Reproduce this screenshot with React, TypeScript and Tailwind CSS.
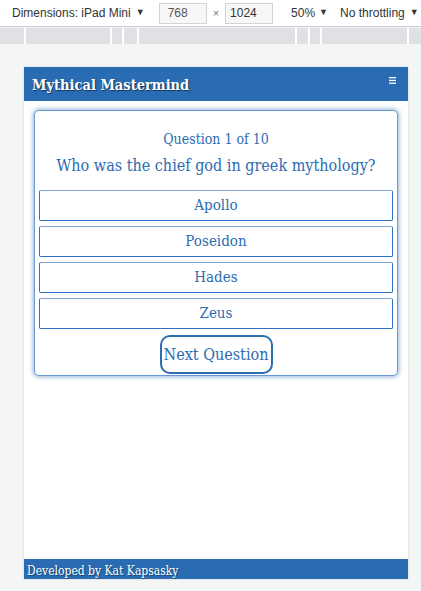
const answers = ["Apollo", "Poseidon", "Hades", "Zeus"];

const rulerSegments = [24, 86, 12, 15, 158, 13, 12, 87, 14];

function Toolbar() {
  return (
    <div className="flex h-[27px] items-center bg-white text-[12px] text-[#333] font-['Liberation_Sans',sans-serif] border-b border-[#cbcdd1]">
      <span className="ml-[12px]">Dimensions: iPad Mini</span>
      <span className="ml-[5px] text-[9px]">▼</span>
      <div className="ml-[14px] flex h-[21px] w-[48px] items-center border border-[#d4d4d4] bg-[#f7f7f7] pl-[8px] text-[#555]">
        768
      </div>
      <span className="mx-[6px] text-[11px] text-[#777]">×</span>
      <div className="flex h-[21px] w-[48px] items-center border border-[#d4d4d4] bg-[#f7f7f7] pl-[4px]">
        1024
      </div>
      <span className="ml-[18px]">50%</span>
      <span className="ml-[4px] text-[9px]">▼</span>
      <span className="ml-[12px]">No throttling</span>
      <span className="ml-[5px] text-[9px]">▼</span>
    </div>
  );
}

function Ruler() {
  return (
    <div className="mt-[1px] flex h-[16px] bg-[#dfe1e5]">
      {rulerSegments.map((w, i) => (
        <div
          key={i}
          style={{ width: w }}
          className={i === 0 ? "h-full" : "h-full border-l-2 border-white"}
        />
      ))}
    </div>
  );
}

function Card() {
  return (
    <div className="mx-[10px] mt-[9px] rounded-[5px] border border-[#6a9ad4] bg-white px-[4px] pt-[16px] pb-[1px] shadow-[0_0_4px_1px_rgba(43,108,179,0.5)]">
      <p className="h-[24px] text-center text-[14px] leading-[24px] text-[#2b6cb3]">
        Question 1 of 10
      </p>
      <p className="mt-[3px] h-[24px] whitespace-nowrap text-center text-[16px] leading-[24px] text-[#2b6cb3]">
        Who was the chief god in greek mythology?
      </p>
      <div className="mt-[12px] flex flex-col gap-[5px]">
        {answers.map((a) => (
          <button
            key={a}
            className="flex h-[31px] items-center justify-center rounded-[2px] border border-[#2f6fbf] border-t-[#7fa6d6] bg-white text-[15px] text-[#2b6cb3]"
          >
            {a}
          </button>
        ))}
      </div>
      <div className="mt-[6px] flex justify-center">
        <button className="h-[39px] w-[113px] whitespace-nowrap rounded-[10px] border-2 border-[#2b6cb3] bg-white text-[16px] text-[#2b6cb3]">
          Next Question
        </button>
      </div>
    </div>
  );
}

export default function App() {
  return (
    <div className="h-[591px] w-[421px] overflow-hidden bg-[#f4f5f5]">
      <Toolbar />
      <Ruler />
      <div className="pt-[23px] pl-[24px]">
        <div className="flex h-[512px] w-[384px] flex-col bg-white font-['DejaVu_Serif',serif] font-stretch-condensed shadow-[0_0_2px_rgba(0,0,0,0.15)]">
          <header className="flex h-[34px] items-center justify-between bg-[#2a6cb3] pt-[1px] pl-[8px] pr-[12px] text-white">
            <span className="text-[14.5px] font-bold [text-shadow:1px_1px_1px_rgba(0,0,0,0.5)]">
              Mythical Mastermind
            </span>
            <svg width="7" height="7" viewBox="0 0 7 7" className="-mt-[8px]">
              <rect x="0" y="0" width="7" height="1.3" fill="white" />
              <rect x="0" y="2.8" width="7" height="1.3" fill="white" />
              <rect x="0" y="5.6" width="7" height="1.3" fill="white" />
            </svg>
          </header>
          <main className="flex-1">
            <Card />
          </main>
          <footer className="flex h-[20px] items-end bg-[#2a6cb3] pl-[3px] text-[12px] leading-[15px] text-white [text-shadow:1px_1px_1px_rgba(0,0,0,0.4)]">
            Developed by Kat Kapsasky
          </footer>
        </div>
      </div>
    </div>
  );
}
